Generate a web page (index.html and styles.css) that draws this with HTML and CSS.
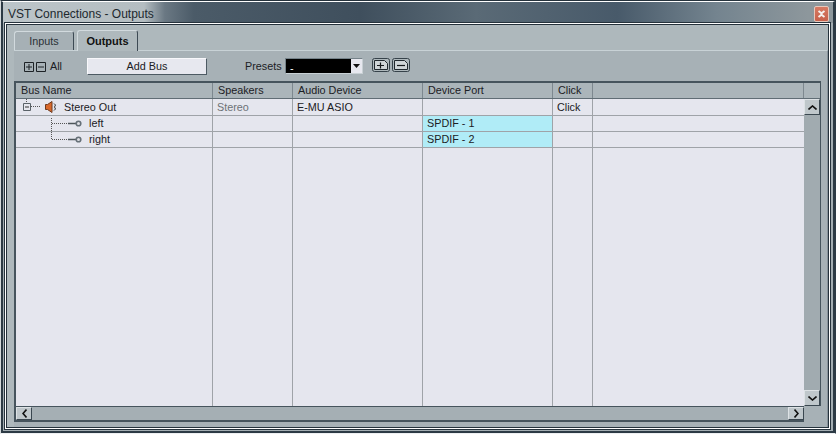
FILE: index.html
```html
<!DOCTYPE html>
<html lang="en">
<head>
<meta charset="utf-8">
<title>VST Connections - Outputs</title>
<link rel="stylesheet" href="styles.css">
</head>
<body>
<div class="window">
  <div class="shell">
    <header class="titlebar">
      <span class="title">VST Connections - Outputs</span>
      <button class="close" type="button"><svg width="9" height="8" viewBox="0 0 9 8"><path d="M1.500 1L4.500 3.200 7.500 1M1.500 7L4.500 4.800 7.500 7M4.500 3v2" fill="none" stroke="#f6f1ee" stroke-width="2"/></svg></button>
    </header>
    <div class="panel">
      <nav class="tabs">
        <div class="tab">Inputs</div>
        <div class="tab active">Outputs</div>
      </nav>
      <div class="tabbody">
        <div class="toolbar">
          <div class="allgroup">
            <svg class="box" width="10" height="10" viewBox="0 0 10 10"><path d="M.5.5h9v9h-9zM2 5h6M5 2v6" fill="none" stroke="#1d2226"/></svg>
            <svg class="box" width="10" height="10" viewBox="0 0 10 10"><path d="M.5.5h9v9h-9zM2 5h6" fill="none" stroke="#1d2226"/></svg>
            <span class="all">All</span>
          </div>
          <button class="addbus" type="button">Add Bus</button>
          <span class="presets">Presets</span>
          <div class="combo"><span class="comboval">-</span><span class="comboarrow"><svg width="7" height="4" viewBox="0 0 7 4"><path d="M0 0h7L3.500 4z" fill="#111"/></svg></span></div>
          <button class="mini first" type="button"><svg width="18" height="14" viewBox="0 0 18 14"><rect x=".5" y=".5" width="17" height="13" rx="2" fill="#aeb8bc" stroke="#36424a"/><path d="M2.500 2.500h10l3 3v6h-13z" fill="#cfd5d8" stroke="#20282e"/><path d="M5 7.500h7M8.500 4.500v6" fill="none" stroke="#15191c" stroke-width="1.200"/></svg></button>
          <button class="mini" type="button"><svg width="18" height="14" viewBox="0 0 18 14"><rect x=".5" y=".5" width="17" height="13" rx="2" fill="#aeb8bc" stroke="#36424a"/><path d="M2.500 2.500h10l3 3v6h-13z" fill="#cfd5d8" stroke="#20282e"/><path d="M5 7.500h8" fill="none" stroke="#15191c" stroke-width="1.200"/></svg></button>
        </div>
        <div class="table">
          <div class="grid">
            <div class="row head">
              <div class="cell c1">Bus Name</div><div class="cell c2">Speakers</div><div class="cell c3">Audio Device</div><div class="cell c4">Device Port</div><div class="cell c5">Click</div><div class="cell c6"></div><div class="cell c7"></div>
            </div>
            <div class="body">
              <div class="rows">
                <div class="columns">
                  <div class="col c1"></div><div class="col c2"></div><div class="col c3"></div><div class="col c4"></div><div class="col c5"></div>
                </div>
                <div class="row parent">
                  <div class="cell c1 tree">
                    <svg class="treeicon" width="48" height="16" viewBox="0 0 48 16"><path d="M10.500 0v4" stroke="#555" stroke-dasharray="1 1" fill="none"/><path d="M7.500 4.500h7v7h-7z" fill="#e6e7ee" stroke="#5a6268"/><path d="M9 8h4" stroke="#333"/><path d="M15 7.500h9" stroke="#555" stroke-dasharray="1 1" fill="none"/><path d="M29.500 5.500h2L36 2.500v11l-4.500-3h-2z" fill="#d9682a" stroke="#6e3a1e"/><path d="M38 4.500l1.500 1.500-1 2 1 2-1.500 1.500" stroke="#333" fill="none"/></svg>
                    <span>Stereo Out</span>
                  </div>
                  <div class="cell c2 dim">Stereo</div><div class="cell c3">E-MU ASIO</div><div class="cell c4"></div><div class="cell c5">Click</div><div class="cell c6"></div>
                </div>
                <div class="row">
                  <div class="cell c1 tree">
                    <svg class="treeicon" width="66" height="16" viewBox="0 0 66 16"><path d="M35.500 2v14M36 7.500h16" stroke="#555" stroke-dasharray="1 1" fill="none"/><path d="M52 7.500h8" stroke="#4d555a" stroke-width="1.500"/><circle cx="62.500" cy="7.500" r="2.300" fill="#dfe0e6" stroke="#667078" stroke-width="1.600"/></svg>
                    <span class="leaf">left</span>
                  </div>
                  <div class="cell c2"></div><div class="cell c3"></div><div class="cell c4 port">SPDIF - 1</div><div class="cell c5"></div><div class="cell c6"></div>
                </div>
                <div class="row">
                  <div class="cell c1 tree">
                    <svg class="treeicon" width="66" height="16" viewBox="0 0 66 16"><path d="M35.500 0v7.500M36 7.500h16" stroke="#555" stroke-dasharray="1 1" fill="none"/><path d="M52 7.500h8" stroke="#4d555a" stroke-width="1.500"/><circle cx="62.500" cy="7.500" r="2.300" fill="#dfe0e6" stroke="#667078" stroke-width="1.600"/></svg>
                    <span class="leaf">right</span>
                  </div>
                  <div class="cell c2"></div><div class="cell c3"></div><div class="cell c4 port">SPDIF - 2</div><div class="cell c5"></div><div class="cell c6"></div>
                </div>
              </div>
              <div class="vscroll">
                <div class="sbtn"><svg width="9" height="5" viewBox="0 0 9 5"><path d="M.5 4.500L4.500 1l4 3.500" fill="none" stroke="#111" stroke-width="1.600"/></svg></div>
                <div class="strack"></div>
                <div class="sbtn"><svg width="9" height="5" viewBox="0 0 9 5"><path d="M.5.500L4.500 4l4-3.500" fill="none" stroke="#111" stroke-width="1.600"/></svg></div>
              </div>
            </div>
          </div>
          <div class="hscroll">
            <div class="sbtn"><svg width="5" height="9" viewBox="0 0 5 9"><path d="M4.500.5L1 4.500l3.500 4" fill="none" stroke="#111" stroke-width="1.600"/></svg></div>
            <div class="strack"></div>
            <div class="sbtn"><svg width="5" height="9" viewBox="0 0 5 9"><path d="M.5.5L4 4.500l-3.500 4" fill="none" stroke="#111" stroke-width="1.600"/></svg></div>
          </div>
        </div>
      </div>
    </div>
  </div>
</div>
</body>
</html>
```
FILE: styles.css
```css
* { box-sizing: border-box; }
html, body { margin: 0; padding: 0; }
body { width: 836px; height: 434px; overflow: hidden; font: 10.800px/16px "Liberation Sans", Arial, sans-serif; color: #1b2024; }
.window {
  width: 836px; height: 434px; display: flex;
  border-style: solid; border-width: 1px;
  border-color: #26333d #2c3a45 #eef0f2 #d5dadc;
}
.shell {
  flex: 1; min-width: 0; display: flex; flex-direction: column;
  background: #a3adb2;
  border-style: solid; border-width: 1px 2px 2px;
  border-color: #fff #2c3a45 #2c3a45;
}
.titlebar {
  height: 21px; flex: none; display: flex; justify-content: space-between; align-items: flex-start;
  padding: 4px 4px 0 5px;
  background: linear-gradient(90deg, #bcc5c9 0, #b4bdc1 17%, #6a7883 19.500%, #4b5b68 23%, #3f4f5d 43%, #5a6a76 57%, #485a6a 74%, #74848f 86%, #8d979c 97%);
}
.title { font-size: 12px; line-height: 17px; color: #20282e; }
.close {
  width: 15px; height: 16px; padding: 0; display: flex; align-items: center; justify-content: center;
  border: 1px solid #e6c8bc; border-radius: 2px;
  background: linear-gradient(#d67a63, #c7604a);
}
.panel {
  flex: 1; min-height: 0; display: flex; flex-direction: column;
  margin: 2px 5px 4px 4px; padding: 5px 0 0 7px;
  background: #aeb8bc;
  box-shadow: 0 0 0 1px #25323c, 0 0 0 2px #fff, 0 0 0 3px #25323c;
}
.tabs { display: flex; align-items: flex-start; height: 20px; flex: none; position: relative; z-index: 1; }
.tab {
  width: 60px; height: 19px; margin-top: 1px; text-align: center; line-height: 18px; color: #2a3036;
  border: 1px solid #d2dade; border-right-color: #3d4a54; border-bottom: 0; border-radius: 3px 3px 0 0;
  background: #a6b0b5;
}
.tab.active {
  width: 61px; height: 21px; margin: 0 0 0 3px; font-size: 11px; font-weight: 700; line-height: 20px; color: #111;
  background: #afb9bd;
}
.tabbody {
  flex: 1; min-height: 0; display: flex; flex-direction: column;
  border-top: 1px solid #c8d2d6; border-right: 1px solid #87929a;
  padding: 0 6px 5px 0;
  background: #a7b1b6;
}
.toolbar { height: 30px; flex: none; display: flex; align-items: flex-start; padding: 7px 0 0 10px; }
.allgroup { display: flex; align-items: flex-start; gap: 2px; width: 63px; }
.box { margin-top: 4px; flex: none; }
.all { margin-left: 2px; }
.addbus {
  width: 120px; height: 17px; padding: 0; font: inherit; color: inherit; line-height: 15px;
  background: #e7e8ef; border: 1px solid; border-color: #f8f8fb #4d5a63 #4d5a63 #f8f8fb;
}
.presets { width: 40px; margin-left: 38px; }
.combo {
  width: 78px; height: 16px; background: #000; color: #fff;
  border: 1px solid #76838a; border-right-color: #c8d0d4; border-bottom-color: #c8d0d4;
  display: flex; justify-content: space-between;
}
.comboval { padding: 2px 0 0 4px; line-height: 14px; }
.comboarrow { width: 11px; background: #e7e8ef; display: flex; align-items: center; justify-content: center; }
.mini {
  width: 18px; height: 14px; padding: 0; margin-left: 2px; border: 0; background: none; display: flex;
}
.mini.first { margin-left: 9px; }
.table {
  flex: 1; min-height: 0; display: flex; flex-direction: column;
  border-top: 2px solid #46545d; border-left: 2px solid #46545d;
}
.grid { flex: 1; min-height: 0; display: flex; flex-direction: column; border-right: 1px solid #46545d; }
.row { display: flex; height: 16px; flex: none; border-bottom: 1px solid #9fa3a8; position: relative; }
.row.parent { height: 17px; }
.row.parent .cell { line-height: 16px; }
.head { background: #abb5ba; border-bottom-color: #606d75; }
.cell { height: 100%; padding-left: 4px; border-right: 1px solid #9fa3a8; white-space: nowrap; flex: none; line-height: 15px; }
.head .cell { padding-left: 5px; border-right-color: #7d888f; }
.c1 { width: 197px; }
.c2 { width: 80px; }
.c3 { width: 130px; }
.c4 { width: 130px; }
.c5 { width: 40px; }
.c6 { width: 211px; }
.rows .c6 { border-right: 0; }
.c7 { width: 16px; }
.head .c7 { border-right: 0; }
.body { flex: 1; min-height: 0; display: flex; }
.rows { flex: 1; min-width: 0; position: relative; background: #e5e6ee; }
.columns { position: absolute; inset: 0; display: flex; }
.col { height: 100%; flex: none; border-right: 1px solid #9fa3a8; }
.tree { padding-left: 0; display: flex; align-items: flex-start; }
.treeicon { flex: none; }
.leaf { margin-left: 7px; }
.dim { color: #6d7276; }
.port { background: #b0ecf7; }
.vscroll { width: 16px; flex: none; display: flex; flex-direction: column; background: #a1abb0; }
.hscroll {
  width: 788px; height: 16px; flex: none; display: flex; background: #a5afb4;
  border-top: 1px solid #46545d; border-bottom: 2px solid #46545d;
}
.strack { flex: 1; }
.sbtn {
  width: 16px; height: 16px; flex: none; display: flex; align-items: center; justify-content: center;
  background: #bfc7cb; border: 1px solid; border-color: #dde2e5 #3a4750 #3a4750 #dde2e5;
}
.hscroll .sbtn { height: 13px; }
```
